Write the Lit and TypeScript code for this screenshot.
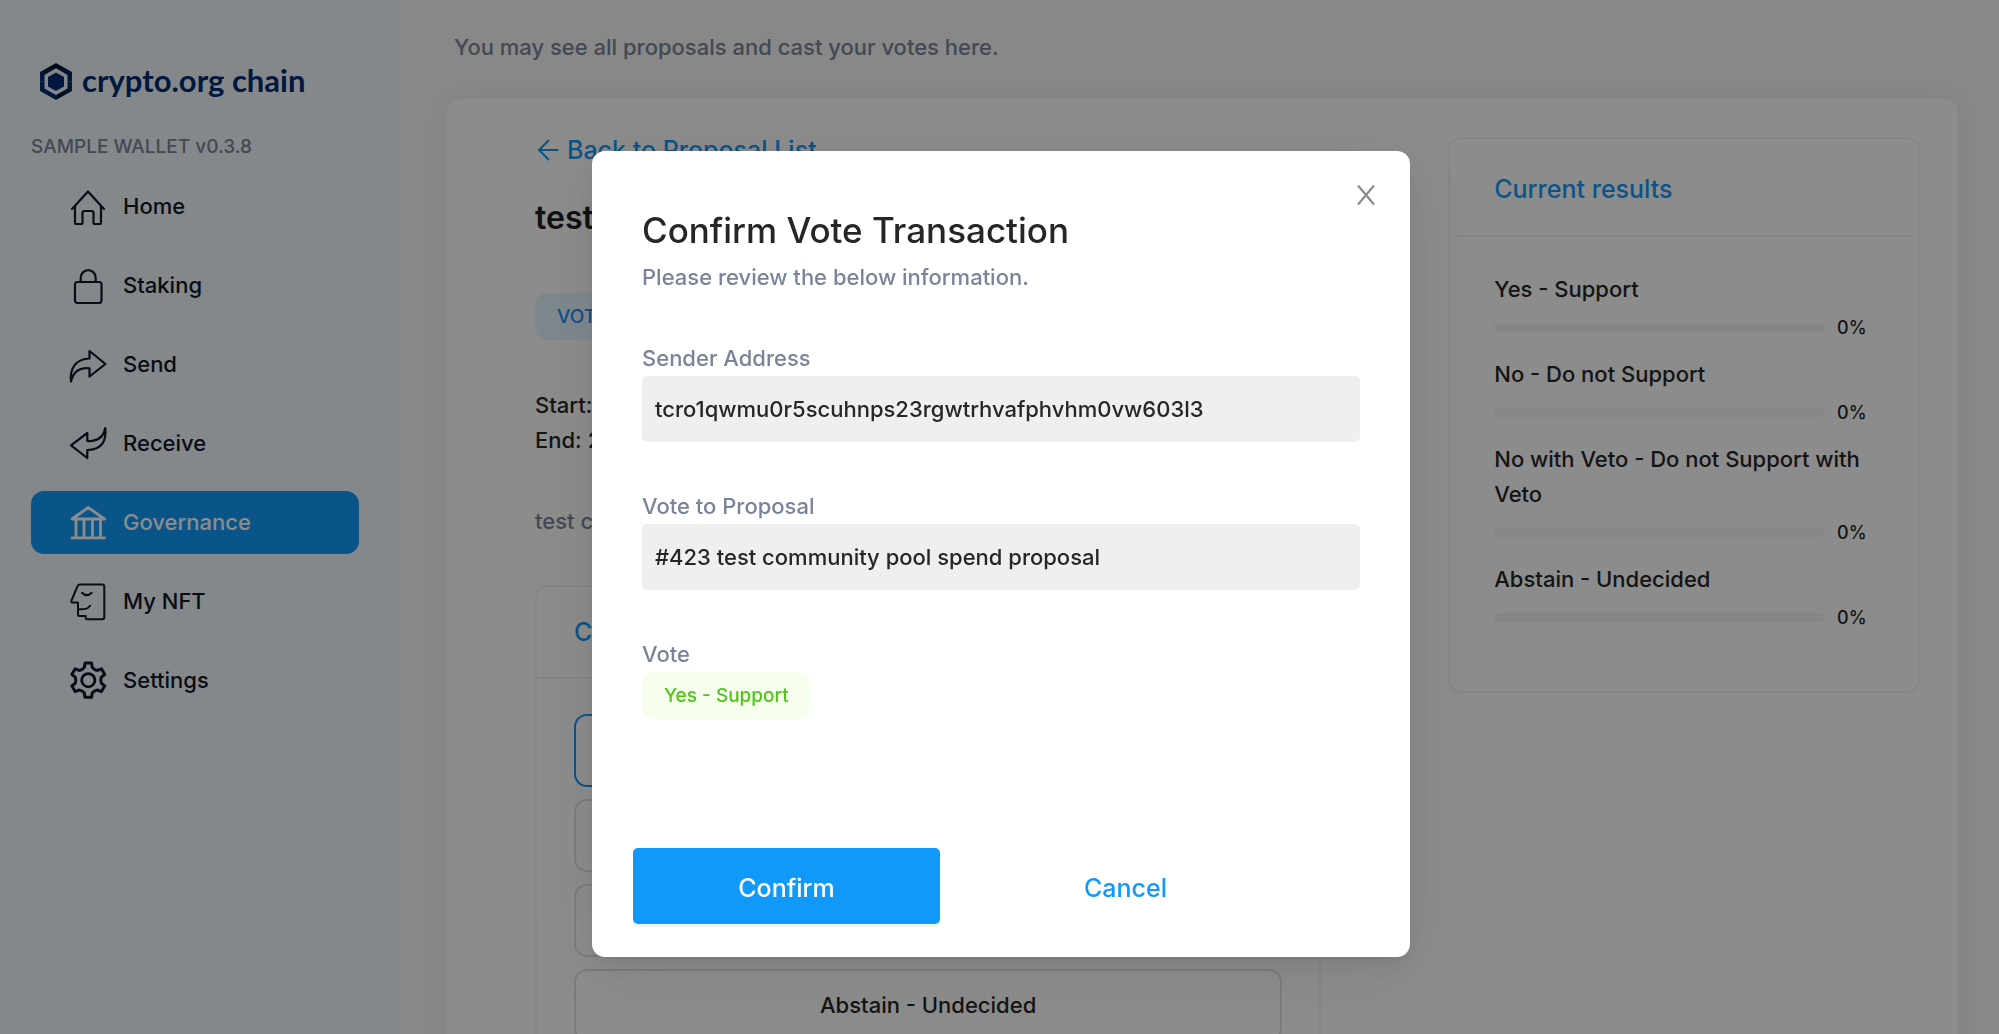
import { LitElement, html, svg, css } from "lit";
import { customElement, property } from "lit/decorators.js";
import { classMap } from "lit/directives/class-map.js";

function gearPath(cx: number, cy: number): string {
  const at = (r: number, deg: number) => {
    const a = ((deg - 90) * Math.PI) / 180;
    return `${(cx + r * Math.cos(a)).toFixed(2)} ${(cy + r * Math.sin(a)).toFixed(2)}`;
  };
  let d = "";
  for (let k = 0; k < 6; k++) {
    const t = k * 60;
    d += `${k === 0 ? "M" : "L"}${at(13.4, t - 17)} L${at(17.4, t - 11)} L${at(17.4, t + 11)} L${at(13.4, t + 17)} Q${at(11.8, t + 30)} ${at(13.4, t + 43)} `;
  }
  return d + "Z";
}

const icons: Record<string, unknown> = {
  home: svg`<path d="M2 20 L18 2.5 L34 20 M5 17 V33.5 Q5 35 6.5 35 H11 Q12.5 35 12.5 33.5 V24 Q12.5 22 14.5 22 H21.5 Q23.5 22 23.5 24 V33.5 Q23.5 35 25 35 H29.5 Q31 35 31 33.5 V17"/>`,
  lock: svg`<rect x="5" y="14" width="26.5" height="21" rx="2.5"/><path d="M10.7 14 V9.7 a7.5 7.5 0 0 1 15 0 V14"/>`,
  send: svg`<path d="M19.5 4 L35.5 17 L19.5 29.5 V21.3 C11 20.5 3.5 24 1 34.5 C-0.5 21 6 12 19.5 11.5 Z"/>`,
  receive: svg`<path d="M17.3 7 L1 19.3 L17.3 32 V24 C30 23.5 37 17 35.2 2 C33.5 12 27 15.5 17.3 15 Z"/>`,
  bank: svg`<path stroke-width="2.8" d="M2 14 L18.3 2.5 L34.5 14 Z M6 14 V32 M14 14 V32 M22.5 14 V32 M30.5 14 V32 M2 32.8 H34.5"/>`,
  face: svg`<path stroke-width="2" d="M10 0.6 H32.3 Q34.3 0.6 34.3 2.6 V33.3 Q34.3 35.3 32.3 35.3 H17 Q15.7 35.3 15.7 34 V32 H9.5 Q8 32 8 30.5 V18.6 H3 Q0.8 18.6 1.5 16.5 L7.5 2.2 Q8.3 0.6 10 0.6 Z M12 8.7 Q16.8 13.5 21.7 8.7 M8 25 Q17 26.5 20 21.7"/>`,
  gear: svg`<path stroke-width="3" d=${gearPath(18.3, 17.2)}/><circle stroke-width="2.8" cx="18.3" cy="17.2" r="6.6"/>`,
};

const navItems = [
  { label: "Home", icon: "home" },
  { label: "Staking", icon: "lock" },
  { label: "Send", icon: "send" },
  { label: "Receive", icon: "receive" },
  { label: "Governance", icon: "bank", active: true },
  { label: "My NFT", icon: "face" },
  { label: "Settings", icon: "gear" },
];

const choices = [
  "Yes - Support",
  "No - Do not Support",
  "No with Veto - Do not Support with Veto",
  "Abstain - Undecided",
];

@customElement("wallet-sidebar")
class WalletSidebar extends LitElement {
  static styles = css`
    :host {
      display: block;
      flex: none;
      box-sizing: border-box;
      width: 398px;
      padding: 63px 39px 0 31px;
      background: #f1f8fc;
    }
    .brand {
      display: flex;
      align-items: flex-start;
      gap: 10px;
      height: 37px;
      padding-left: 9px;
      font: 700 31px/34px Lato, "Open Sans", sans-serif;
      color: #002d74;
    }
    .mark { flex: none; }
    .version {
      margin: 32px 0 13px;
      font-size: 19px;
      line-height: 30px;
      color: #7b8496;
    }
    .nav {
      display: flex;
      flex-direction: column;
      gap: 16px;
    }
    .item {
      display: flex;
      align-items: center;
      gap: 17px;
      height: 63px;
      padding-left: 39px;
      border-radius: 13px;
      color: #0f1729;
      text-decoration: none;
    }
    .item.active {
      background: #1199fa;
      color: #fff;
    }
    .icon {
      flex: none;
      overflow: visible;
      fill: none;
      stroke: currentColor;
      stroke-width: 2.2;
      stroke-linejoin: round;
      stroke-linecap: round;
    }
  `;
  render() {
    return html`
      <div class="brand">
        <svg class="mark" width="32" height="37" viewBox="0 0 32 37" aria-hidden="true">
          <defs>
            <linearGradient id="up" x1="0" y1="0" x2="1" y2="0">
              <stop offset="0" stop-color="#03316c" />
              <stop offset="0.5" stop-color="#061024" />
              <stop offset="1" stop-color="#002d74" />
            </linearGradient>
            <linearGradient id="down" x1="0" y1="0" x2="1" y2="0">
              <stop offset="0" stop-color="#002d74" />
              <stop offset="0.5" stop-color="#002d74" />
              <stop offset="0.6" stop-color="#061024" />
              <stop offset="1" stop-color="#03316c" />
            </linearGradient>
          </defs>
          <path fill="url(#up)" d="M0 18.5 V9 L16 0 L32 9 V18.5 H27.5 V12 L16 5.3 L4.5 12 V18.5 Z" />
          <path fill="url(#down)" d="M0 18.5 V28 L16 37 L32 28 V18.5 H27.5 V25.5 L16 32 L4.5 25.5 V18.5 Z" />
          <path fill="#002d74" d="M16 9.5 L24 14 V23.5 L16 28 L8 23.5 V14 Z" />
        </svg>
        <span>crypto.org chain</span>
      </div>
      <div class="version">SAMPLE WALLET v0.3.8</div>
      <nav class="nav">
        ${navItems.map(
          (n) => html`<a href="#" class=${classMap({ item: true, active: !!n.active })}>
            <svg class="icon" width="36" height="36" viewBox="0 0 36 36" aria-hidden="true">${icons[n.icon]}</svg>
            <span>${n.label}</span>
          </a>`
        )}
      </nav>
    `;
  }
}

@customElement("vote-results")
class VoteResults extends LitElement {
  static styles = css`
    :host {
      display: block;
      box-sizing: border-box;
      border: 2px solid #f4f4f4;
      border-radius: 13px;
      padding: 0 6px 54px;
    }
    .title {
      margin: 0;
      padding: 31px 38px 27px;
      border-bottom: 2px solid #f4f4f4;
      font-size: 25px;
      font-weight: inherit;
      line-height: 38px;
      color: #1199fa;
    }
    .list {
      display: flex;
      flex-direction: column;
      gap: 10px;
      padding: 35px 38px 0;
    }
    .meter {
      display: grid;
      grid-template-columns: 1fr 37px;
      gap: 13px;
      align-items: center;
      height: 40px;
      font-size: 18px;
    }
    .track {
      height: 9px;
      border-radius: 5px;
      background: #f5f5f5;
      overflow: hidden;
    }
    .fill {
      height: 100%;
      background: #1199fa;
    }
  `;
  @property({ type: Array }) results: { label: string; value: number }[] = [];
  render() {
    return html`
      <h3 class="title">Current results</h3>
      <div class="list">
        ${this.results.map(
          (r) => html`<div>
            <div>${r.label}</div>
            <div class="meter">
              <div class="track" role="progressbar" aria-label=${r.label} aria-valuenow=${r.value} aria-valuemin="0" aria-valuemax="100">
                <div class="fill" style="width:${r.value}%"></div>
              </div>
              <span>${r.value}%</span>
            </div>
          </div>`
        )}
      </div>
    `;
  }
}

@customElement("confirm-vote")
class ConfirmVote extends LitElement {
  static styles = css`
    :host {
      position: fixed;
      inset: 0;
      display: flex;
      justify-content: center;
      align-items: flex-start;
      padding: 151px 0 0 3px;
      background: rgba(0, 0, 0, 0.45);
    }
    .dialog {
      position: relative;
      box-sizing: border-box;
      width: 818px;
      padding: 54px 50px 33px;
      border-radius: 13px;
      background: #fff;
      box-shadow: 0 5px 10px -6px rgba(0, 0, 0, 0.12), 0 10px 26px rgba(0, 0, 0, 0.08),
        0 14px 76px 13px rgba(0, 0, 0, 0.05);
    }
    .close {
      position: absolute;
      top: 26px;
      right: 26px;
      display: grid;
      place-items: center;
      width: 36px;
      height: 36px;
      padding: 0;
      border: 0;
      background: none;
      color: #8c8c8c;
    }
    .title {
      margin: 0 0 5px;
      font-size: 35px;
      font-weight: 500;
      line-height: 50px;
    }
    .muted { color: #7a8499; }
    .fields {
      display: flex;
      flex-direction: column;
      gap: 47px;
      margin: 46px 0 0;
    }
    .value {
      margin: 0;
      padding: 0 13px;
      border-radius: 5px;
      background: #efefef;
      line-height: 66px;
    }
    .choice { margin: 0; display: flex; }
    .tag {
      padding: 0 22px;
      border-radius: 12px;
      background: #f6ffed;
      color: #52c41a;
      font-size: 19px;
      font-weight: 500;
      line-height: 47px;
    }
    .actions {
      display: flex;
      gap: 32px;
      margin: 129px 0 0 -9px;
    }
    .btn {
      width: 307px;
      height: 76px;
      padding: 4px 0 0;
      border: 0;
      border-radius: 5px;
      background: none;
      color: #1199fa;
      font: inherit;
      font-size: 25px;
      font-weight: 500;
    }
    .btn.primary {
      background: #1199fa;
      color: #fff;
      box-shadow: 0 3px 0 rgba(0, 0, 0, 0.05);
    }
  `;
  render() {
    return html`
      <div class="dialog" role="dialog" aria-modal="true" aria-labelledby="heading">
        <button class="close" aria-label="Close">
          <svg width="20" height="22" viewBox="0 0 20 22" fill="none" stroke="currentColor" stroke-width="2.2" aria-hidden="true">
            <path d="M2 1.5 L18 20.5 M18 1.5 L2 20.5" />
          </svg>
        </button>
        <h2 class="title" id="heading">Confirm Vote Transaction</h2>
        <div class="muted">Please review the below information.</div>
        <dl class="fields">
          <div>
            <dt class="muted">Sender Address</dt>
            <dd class="value">tcro1qwmu0r5scuhnps23rgwtrhvafphvhm0vw603l3</dd>
          </div>
          <div>
            <dt class="muted">Vote to Proposal</dt>
            <dd class="value">#423 test community pool spend proposal</dd>
          </div>
          <div>
            <dt class="muted">Vote</dt>
            <dd class="choice"><span class="tag">Yes - Support</span></dd>
          </div>
        </dl>
        <div class="actions">
          <button class="btn primary">Confirm</button>
          <button class="btn">Cancel</button>
        </div>
      </div>
    `;
  }
}

@customElement("app-root")
class AppRoot extends LitElement {
  static styles = css`
    :host {
      display: flex;
      height: 100vh;
      overflow: hidden;
      background: #f8f8f8;
      color: #262626;
      font: 450 22px/35px Inter, "Liberation Sans", sans-serif;
    }
    .main {
      flex: 1;
      min-width: 0;
      padding: 30px 41px 0 49px;
    }
    .intro {
      margin: 0 0 34px;
      padding-left: 7px;
      color: #7a8499;
    }
    .panel {
      display: grid;
      grid-template-columns: 5fr 3fr;
      gap: 127px;
      align-items: start;
      box-sizing: border-box;
      padding: 38px 38px 80px 88px;
      border-radius: 13px;
      background: #fff;
      box-shadow: 0 0 32px rgba(0, 0, 0, 0.06);
    }
    .back {
      display: flex;
      align-items: center;
      gap: 8px;
      padding-left: 2px;
      font-size: 25px;
      line-height: 26px;
      color: #1199fa;
      text-decoration: none;
    }
    .title {
      margin: 33px 0 53px;
      font-size: 32px;
      font-weight: 600;
      line-height: 44px;
      color: #1f1f1f;
    }
    .status {
      display: inline-block;
      padding: 0 22px;
      border-radius: 12px;
      background: #e6f7ff;
      color: #1890ff;
      font-size: 19px;
      font-weight: 500;
      line-height: 47px;
      vertical-align: top;
    }
    .dates { margin: 48px 0 46px; }
    .text {
      margin: 0 0 46px;
      color: #7a8499;
    }
    .cast {
      border: 2px solid #f4f4f4;
      border-radius: 13px;
    }
    .cast-title {
      margin: 0;
      padding: 27px 37px;
      border-bottom: 2px solid #f4f4f4;
      font-size: 25px;
      font-weight: inherit;
      line-height: 36px;
      color: #1199fa;
    }
    .options {
      display: flex;
      flex-direction: column;
      gap: 12px;
      padding: 35px 37px;
    }
    .option {
      height: 73px;
      padding: 0;
      border: 2px solid #e2e2e2;
      border-radius: 13px;
      background: none;
      color: inherit;
      font: inherit;
    }
    .option.chosen {
      border-color: #1199fa;
      color: #1199fa;
    }
  `;
  render() {
    return html`
      <wallet-sidebar></wallet-sidebar>
      <main class="main">
        <p class="intro">You may see all proposals and cast your votes here.</p>
        <div class="panel">
          <section>
            <a class="back" href="#">
              <svg width="22" height="22" viewBox="0 0 22 22" fill="none" stroke="currentColor" stroke-width="2" aria-hidden="true">
                <path d="M21.5 11 H2 M12 1 L2 11 L12 21" />
              </svg>
              <span>Back to Proposal List</span>
            </a>
            <h1 class="title">test community pool spend proposal</h1>
            <span class="status">VOTING</span>
            <div class="dates">
              <div>Start:</div>
              <div>End: 2</div>
            </div>
            <p class="text">test community pool spend proposal</p>
            <div class="cast">
              <h3 class="cast-title">Cast your vote</h3>
              <div class="options">
                ${choices.map(
                  (c, i) => html`<button class=${classMap({ option: true, chosen: i === 0 })}>${c}</button>`
                )}
              </div>
            </div>
          </section>
          <vote-results .results=${choices.map((label) => ({ label, value: 0 }))}></vote-results>
        </div>
      </main>
      <confirm-vote></confirm-vote>
    `;
  }
}
